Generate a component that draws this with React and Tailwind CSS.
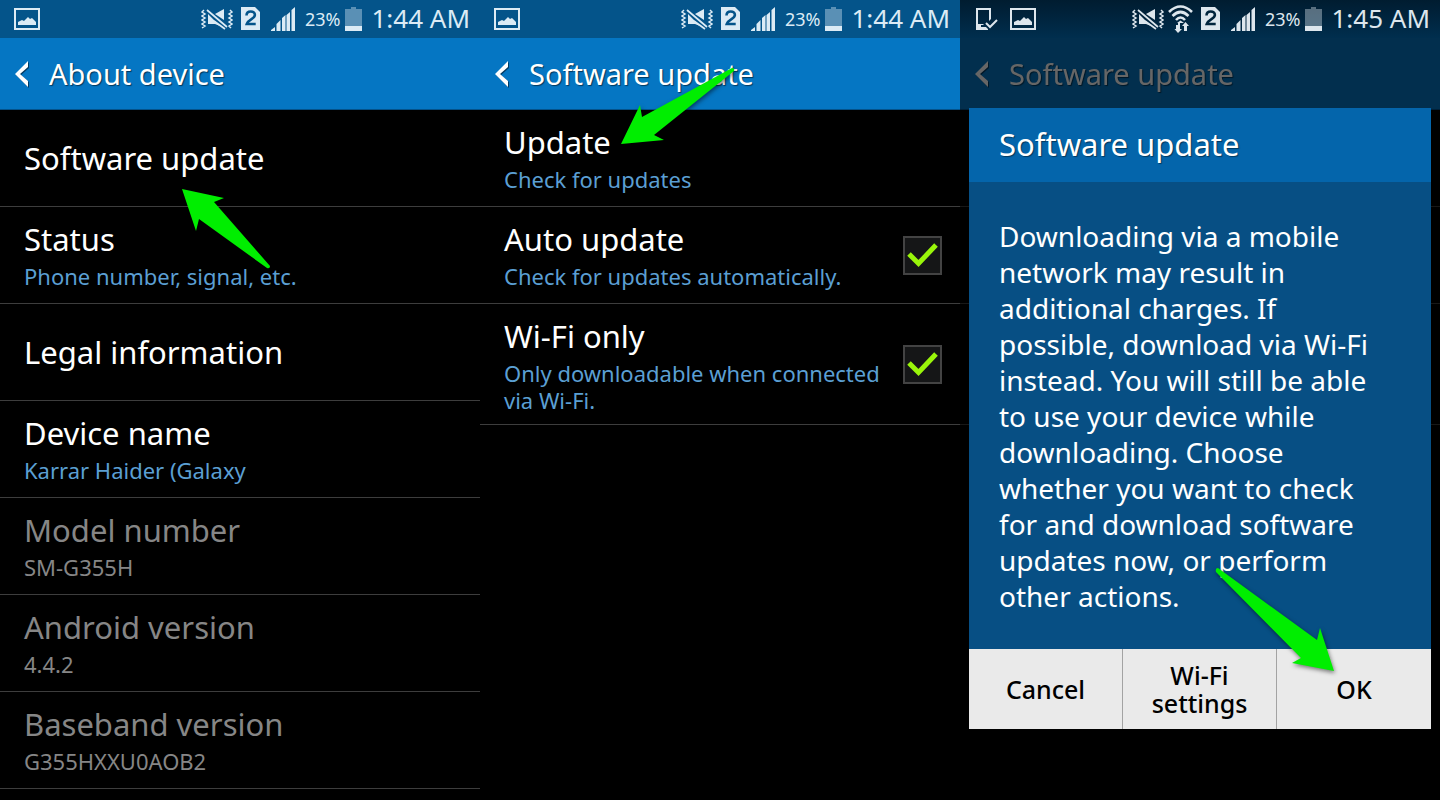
import React from 'react';

const aboutRows = [
    { title: 'Software update' },
    { title: 'Status', desc: 'Phone number, signal, etc.' },
    { title: 'Legal information' },
    { title: 'Device name', desc: 'Karrar Haider (Galaxy' },
    { title: 'Model number', desc: 'SM-G355H', disabled: true },
    { title: 'Android version', desc: '4.4.2', disabled: true },
    { title: 'Baseband version', desc: 'G355HXXU0AOB2', disabled: true },
];

const updateRows = [
    { title: 'Update', desc: 'Check for updates' },
    { title: 'Auto update', desc: 'Check for updates automatically.', checkbox: true },
    { title: 'Wi-Fi only', desc: 'Only downloadable when connected via Wi-Fi.', checkbox: true },
];

const PictureIcon = () => (
    <svg className="w-[26px] h-[22px]" viewBox="0 0 26 22" fill="currentColor">
        <path fillRule="evenodd" d="M0 0h26v22H0zM2 2v18h22V2z" />
        <path d="M4 17v-3l4-2 2 1 4-4 2 2 2-1 4 4v3z" />
    </svg>
);

const PhoneCheckIcon = () => (
    <svg className="w-[22px] h-[22px]" viewBox="0 0 22 22" fill="currentColor">
        <path fillRule="evenodd" d="M0 0h15v11l-2 2V2H2v14h5l5 5v1H0z" />
        <path d="M5 18h5" stroke="#002b49" strokeWidth="2" />
        <path d="m10 15 4 4 7-7" fill="none" stroke="currentColor" strokeWidth="2" />
    </svg>
);

const MuteIcon = () => (
    <svg className="w-8 h-[22px]" viewBox="0 0 32 22" fill="currentColor">
        <path d="m3 2-2 2 3 2-3 2 3 2-3 2 3 2-3 2 3 2-3 2M29 2l2 2-3 2 3 2-3 2 3 2-3 2 3 2-3 2 2 2" fill="none" stroke="currentColor" strokeWidth="1.5" />
        <path d="M23 1v11L14 6z" />
        <path d="M7 6v10h7l5 2z" />
        <path d="m6 2 20 17M13 13l11 8" fill="none" stroke="currentColor" strokeWidth="1.700" />
    </svg>
);

const WifiIcon = () => (
    <svg className="w-[25px] h-7 -ml-1" viewBox="0 0 25 28" fill="none" stroke="currentColor" strokeWidth="2.600">
        <path d="M1 7q11.500-11 23 0M4.500 11q8-8 16 0M8 15q4.500-5 9 0" />
        <path d="M12.500 15.500 16 18h-7z" fill="currentColor" stroke="none" />
        <path d="M8 20h2v-2h2v6h2l-4 4-3.500-4H8zM16 26v-5h-2l3.500-4 3.500 4h-2v5z" fill="currentColor" stroke="none" />
    </svg>
);

const SimIcon = ({ dark }) => (
    <svg className="w-[19px] h-6" viewBox="0 0 19 24" fill="currentColor">
        <path d="M0 0h14l5 5v18H0z" />
        <path d="M5.500 8.500q0-4 4.200-4t4.200 3.500c0 4-7 4.500-8.200 9h9" fill="none" stroke={dark ? '#00243c' : '#04548a'} strokeWidth="2.600" />
    </svg>
);

const SignalIcon = () => (
    <svg className="w-6 h-6" viewBox="0 0 24 24" fill="currentColor">
        <path d="M0 24v-1l4-3v4zM5.500 24v-7l4-4v11zM11 24V11l3.500-3v16zM15.500 24V8l3.500-3v19zM20.500 24V3L24 0v24z" />
    </svg>
);

const BatteryIcon = () => (
    <svg className="w-[17px] h-6" viewBox="0 0 17 24" fill="currentColor">
        <path d="M0 2h6V0h5v2h6v17H0z" opacity="0.400" />
        <path d="M0 19h17v5H0z" />
    </svg>
);

const StatusBar = ({ time, dark }) => (
    <div
        className={
            dark
                ? 'relative z-10 flex items-center h-[38px] pl-4 pr-[10px] text-[#dde6ed]'
                : 'flex items-center h-[38px] pl-[14px] pr-[10px] bg-[#04548a] text-[#dcebf5]'
        }
    >
        <div className="flex items-center gap-3">
            {dark && <PhoneCheckIcon />}
            <PictureIcon />
        </div>
        <div className="flex items-center gap-2 ml-auto">
            <MuteIcon />
            {dark && <WifiIcon />}
            <SimIcon dark={dark} />
            <div className="flex items-center gap-[10px] pl-[3px]">
                <SignalIcon />
                <div className="flex items-center gap-[5px]">
                    <span className="text-lg leading-6">23%</span>
                    <BatteryIcon />
                </div>
            </div>
            <span className="text-[26px] leading-8 pl-px pb-[2px]">{time}</span>
        </div>
    </div>
);

const TitleBar = ({ title }) => (
    <header className="flex items-center gap-5 h-[72px] pl-[14px] bg-[#0576c3] border-b border-[#04528a] text-white">
        <button aria-label="Back" className="drop-shadow-[1px_1px_0px_#023b63]">
            <svg className="w-[15px] h-[26px]" viewBox="0 0 15 26" fill="currentColor">
                <path d="M14 0v6L6 13l8 7v6L1 13z" />
            </svg>
        </button>
        <h1 className="text-[29px] leading-10 [text-shadow:1px_1px_1px_#02395f]">{title}</h1>
    </header>
);

const CheckBox = ({ id }) => (
    <span className="grid shrink-0">
        <input
            id={id}
            type="checkbox"
            defaultChecked
            className="peer appearance-none col-start-1 row-start-1 w-[39px] h-[39px] bg-[#151617] border-2 border-[#434343]"
        />
        <svg className="hidden peer-checked:block pointer-events-none col-start-1 row-start-1 w-[39px] h-[39px]" viewBox="0 0 39 39" fill="none">
            <path d="m6 18 9.500 9.500L33 9" stroke="#99f50a" strokeWidth="5" />
        </svg>
    </span>
);

const SettingRow = ({ item }) => {
    const id = item.title.toLowerCase().replace(/ /g, '-');
    const Tag = item.checkbox ? 'label' : 'button';
    return (
        <li className="border-b border-[#3d3d3d]">
            <Tag
                htmlFor={item.checkbox ? id : undefined}
                disabled={item.disabled && !item.checkbox ? true : undefined}
                className="flex items-center gap-3 w-full min-h-24 pl-6 pr-[18px] text-left"
            >
                <span className={item.desc ? 'flex flex-col gap-1 flex-1 self-start pt-3 pb-[10px]' : 'flex-1'}>
                    <span className={item.disabled ? 'text-[31px] leading-10 text-[#868686]' : 'text-[31px] leading-10 text-white'}>
                        {item.title}
                    </span>
                    {item.desc && (
                        <span className={item.disabled ? 'text-[22px] leading-[27px] text-[#868686]' : 'text-[22px] leading-[27px] text-[#5b9fd3]'}>
                            {item.desc}
                        </span>
                    )}
                </span>
                {item.checkbox && <CheckBox id={id} />}
            </Tag>
        </li>
    );
};

const SettingList = ({ rows }) => (
    <ul>
        {rows.map((item) => (
            <SettingRow key={item.title} item={item} />
        ))}
    </ul>
);

const Arrow = ({ className, viewBox, d }) => (
    <svg className={className} viewBox={viewBox} fill="#00ee00">
        <path d={d} />
    </svg>
);

const UpdateDialog = () => (
    <div role="dialog" aria-labelledby="dialog-title" className="relative w-full bg-[#074f84] text-white">
        <h2 id="dialog-title" className="px-[30px] pt-4 pb-[18px] bg-[#0465ab] text-[31px] leading-10 [text-shadow:1px_1px_1px_#02395f]">
            Software update
        </h2>
        <p className="pl-[30px] pr-10 pt-9 pb-[35px] text-[28px] leading-9">
            Downloading via a mobile network may result in additional charges. If possible, download via Wi-Fi
            instead. You will still be able to use your device while downloading. Choose whether you want to check
            for and download software updates now, or perform other actions.
        </p>
        <div className="grid grid-cols-3 h-20 divide-x divide-[#a3a3a3] bg-[#eaeaea] text-[25px] leading-7 font-medium text-black">
            <button>Cancel</button>
            <button className="px-5">Wi-Fi settings</button>
            <button>OK</button>
        </div>
        <Arrow
            className="absolute right-[97px] bottom-[57px] w-[120px] h-[105px] pointer-events-none drop-shadow-[1px_2px_2px_rgba(0,0,0,0.5)]"
            viewBox="0 0 120 105"
            d="m4 1 99 72 3-12 14 43-42-8 9-5L2 5Q1 1 4 1z"
        />
    </div>
);

export default function App() {
    return (
        <main className="grid grid-cols-3 min-h-screen bg-black font-['Noto_Sans',sans-serif]">
            <section className="relative">
                <StatusBar time="1:44 AM" />
                <TitleBar title="About device" />
                <SettingList rows={aboutRows} />
                <Arrow
                    className="absolute left-[182px] top-[189px] w-[90px] h-20 pointer-events-none"
                    viewBox="0 0 90 80"
                    d="m0 0 42 9-10 4 56 64q0 3-3 2L17 30l-3 12z"
                />
            </section>

            <section className="relative">
                <StatusBar time="1:44 AM" />
                <TitleBar title="Software update" />
                <SettingList rows={updateRows} />
                <Arrow
                    className="absolute left-[141px] top-[67px] w-[115px] h-[78px] pointer-events-none drop-shadow-[1px_2px_2px_rgba(0,0,0,0.5)]"
                    viewBox="0 0 115 78"
                    d="m0 77 19-39 2 12 90-49q3 0 2 3L33 68l10 5z"
                />
            </section>

            <section className="relative bg-gradient-to-b from-[#001c30] to-[#002e4e] bg-[length:100%_38px] bg-no-repeat">
                <StatusBar time="1:45 AM" dark />
                {/* dimmed page under the dialog, only its dividers show at the sides */}
                <div inert className="opacity-40">
                    <TitleBar title="Software update" />
                    <div className="h-[97px] border-b border-[#3d3d3d]" />
                    <div className="h-[97px] border-b border-[#3d3d3d]" />
                    <div className="h-[121px] border-b border-[#3d3d3d]" />
                </div>
                <div className="absolute inset-x-0 top-[108px] px-[9px]">
                    <UpdateDialog />
                </div>
            </section>
        </main>
    );
}
